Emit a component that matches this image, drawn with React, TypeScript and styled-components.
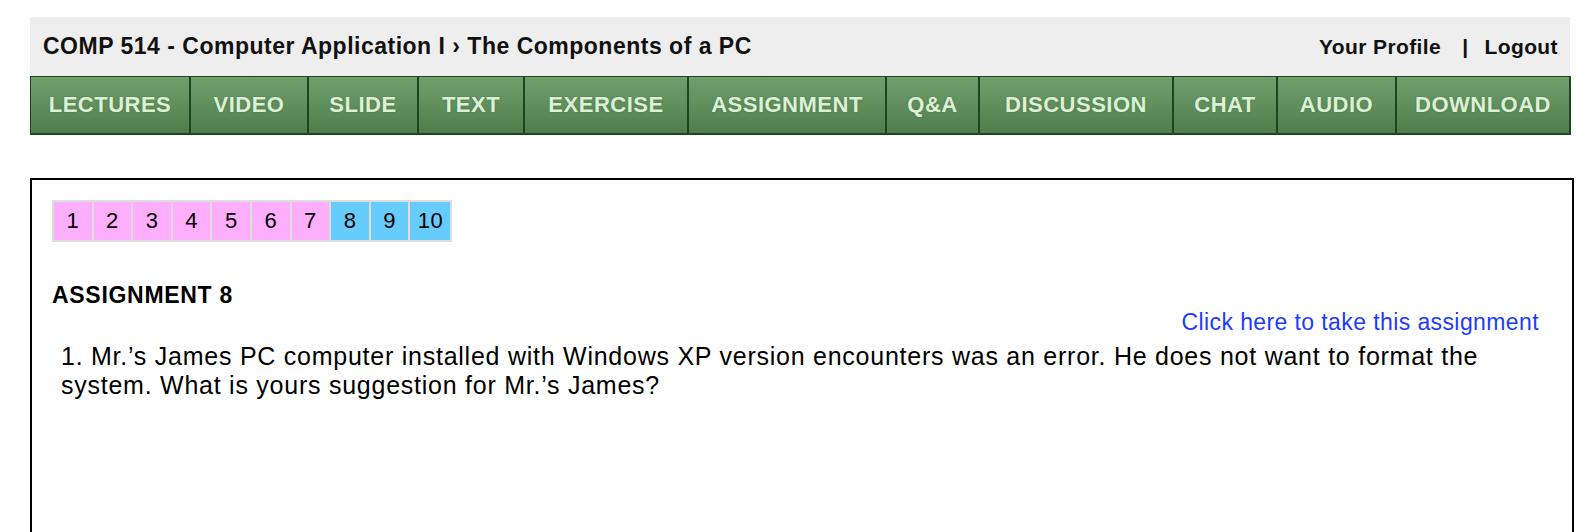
import React from "react";
import styled, { createGlobalStyle } from "styled-components";

const tabs: { label: string; width: number }[] = [
  { label: "LECTURES", width: 161 },
  { label: "VIDEO", width: 118 },
  { label: "SLIDE", width: 110 },
  { label: "TEXT", width: 106 },
  { label: "EXERCISE", width: 164 },
  { label: "ASSIGNMENT", width: 198 },
  { label: "Q&A", width: 93 },
  { label: "DISCUSSION", width: 194 },
  { label: "CHAT", width: 104 },
  { label: "AUDIO", width: 119 },
  { label: "DOWNLOAD", width: 174 },
];

const pages = [1, 2, 3, 4, 5, 6, 7, 8, 9, 10];
const current = 8;

const App: React.FC = () => (
  <>
    <GlobalStyle />
    <Page>
      <TopBar>
        <CourseTitle>COMP 514 - Computer Application I › The Components of a PC</CourseTitle>
        <UserLinks>
          <span>Your Profile</span>
          <Divider>|</Divider>
          <span>Logout</span>
        </UserLinks>
      </TopBar>
      <NavBar>
        {tabs.map((t, i) => (
          <NavButton key={t.label} $width={t.width} $first={i === 0}>
            {t.label}
          </NavButton>
        ))}
      </NavBar>
      <ContentBox>
        <Pager>
          {pages.map((p) => (
            <PageCell key={p} $done={p < current}>
              {p}
            </PageCell>
          ))}
        </Pager>
        <AssignmentTitle>ASSIGNMENT 8</AssignmentTitle>
        <TakeLinkRow>
          <TakeLink href="#">Click here to take this assignment</TakeLink>
        </TakeLinkRow>
        <Question>
          1. Mr.’s James PC computer installed with Windows XP version encounters was an error. He
          does not want to format the system. What is yours suggestion for Mr.’s James?
        </Question>
      </ContentBox>
    </Page>
  </>
);

const GlobalStyle = createGlobalStyle`
  body {
    margin: 0;
    background: #ffffff;
    font-family: "Liberation Sans", Arial, sans-serif;
    color: #000;
  }
`;

const Page = styled.div`
  padding: 17px 22px 0 30px;
`;

const TopBar = styled.div`
  display: flex;
  align-items: center;
  justify-content: space-between;
  width: 1540px;
  height: 59px;
  box-sizing: border-box;
  padding: 0 12px 0 13px;
  background: #eeeeee;
  font-weight: bold;
  color: #111;
`;

const CourseTitle = styled.div`
  font-size: 23px;
  letter-spacing: 0.5px;
`;

const UserLinks = styled.div`
  display: flex;
  font-size: 21px;
  letter-spacing: 0.4px;
`;

const Divider = styled.span`
  margin: 0 16px 0 21px;
`;

const NavBar = styled.div`
  display: flex;
  width: 1541px;
  height: 59px;
`;

const NavButton = styled.div<{ $width: number; $first: boolean }>`
  width: ${(p) => p.$width}px;
  box-sizing: border-box;
  display: flex;
  align-items: center;
  justify-content: center;
  border: 1px solid #1f4520;
  border-left-width: ${(p) => (p.$first ? 1 : 0)}px;
  border-right-width: 2px;
  border-bottom-width: 2px;
  background: linear-gradient(#70a06e 0%, #62915f 45%, #4f7e4d 100%);
  color: #dcf0d6;
  font-size: 22px;
  font-weight: bold;
  letter-spacing: 0.5px;
  text-shadow: 0 0 2px rgba(60, 100, 60, 0.7);
`;

const ContentBox = styled.div`
  margin-top: 43px;
  width: 1544px;
  min-height: 420px;
  box-sizing: border-box;
  border: 2px solid #000;
  padding: 20px 33px 0 20px;
`;

const Pager = styled.div`
  display: inline-flex;
  gap: 2px;
  padding: 2px;
  background: #dddddd;
`;

const PageCell = styled.div<{ $done: boolean }>`
  min-width: 37.6px;
  height: 38px;
  box-sizing: border-box;
  padding: 0 7.5px;
  display: flex;
  align-items: center;
  justify-content: center;
  background: ${(p) => (p.$done ? "#fdaefc" : "#66ccfe")};
  font-size: 22px;
  letter-spacing: 0.3px;
`;

const AssignmentTitle = styled.div`
  margin-top: 40px;
  font-size: 23px;
  font-weight: bold;
  letter-spacing: 0.7px;
`;

const TakeLinkRow = styled.div`
  display: flex;
  justify-content: flex-end;
`;

const TakeLink = styled.a`
  color: #1e3bff;
  font-size: 23px;
  letter-spacing: 0.4px;
  text-decoration: none;
`;

const Question = styled.p`
  margin: 6px 0 0 9px;
  font-size: 25px;
  line-height: 29px;
  letter-spacing: 0.75px;
`;

export default App;
